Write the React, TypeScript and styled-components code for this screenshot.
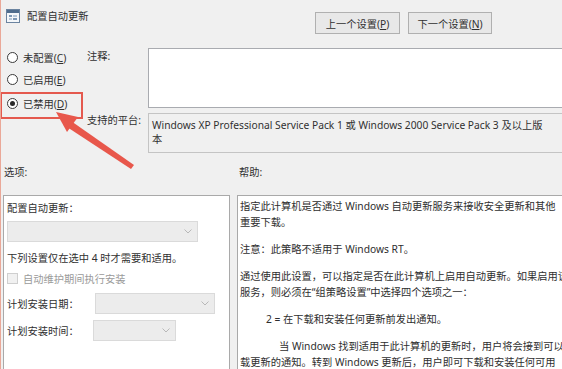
import styled, { createGlobalStyle } from "styled-components";

const GlobalStyle = createGlobalStyle`
  html, body {
    margin: 0;
    padding: 0;
    background: #f0f0f0;
  }
  body {
    font-family: "Noto Sans", "Noto Sans CJK SC", sans-serif;
    font-size: 10.25px;
    color: #303030;
  }
`;

const Window = styled.div`
  position: relative;
  width: 562px;
  height: 369px;
  overflow: hidden;
  box-sizing: border-box;
  border-left: 1px solid #eaa898;
  background: #f0f0f0;
`;

const Header = styled.div`
  height: 48px;
  display: flex;
  align-items: flex-start;
`;

const Title = styled.div`
  width: 314px;
  padding: 9px 0 0 5px;
  box-sizing: border-box;
  display: flex;
  align-items: center;
  gap: 7px;
  line-height: 14px;
`;

const NavButtons = styled.div`
  display: flex;
  gap: 8px;
  padding-top: 12px;
`;

const NavButton = styled.button<{ $w: number }>`
  width: ${(p) => p.$w}px;
  height: 22px;
  padding: 0;
  font: inherit;
  color: #303030;
  background: #e8e8e8;
  border: 1px solid #b0b0b0;
`;

const Key = styled.span`
  text-decoration: underline;
`;

const Settings = styled.div`
  display: grid;
  grid-template-columns: 86px 61px 1fr;
  grid-template-rows: 60px 40px;
  row-gap: 5px;
`;

const Radios = styled.div`
  grid-row: 1 / 3;
  display: flex;
  flex-direction: column;
  gap: 3px;
`;

const RadioItem = styled.label<{ $marked?: boolean }>`
  display: flex;
  align-items: center;
  gap: 5px;
  height: 19px;
  padding-left: 6px;
  ${(p) =>
    p.$marked &&
    `
    border: 2px solid #e4594e;
    border-left-width: 1px;
    padding: 0 0 4px 5px;
    width: 74px;
  `}
`;

const RadioCircle = styled.span<{ $on?: boolean }>`
  width: 11px;
  height: 11px;
  box-sizing: border-box;
  border-radius: 50%;
  border: 1px solid #3a3a3a;
  background: #fff;
  display: flex;
  align-items: center;
  justify-content: center;
  &::after {
    content: "";
    width: 5px;
    height: 5px;
    border-radius: 50%;
    background: ${(p) => (p.$on ? "#2a2a2a" : "transparent")};
  }
`;

const FieldLabel = styled.div<{ $top: number }>`
  line-height: 14px;
  padding-top: ${(p) => p.$top}px;
`;

const Comment = styled.div`
  width: 430px;
  background: #fff;
  border: 1px solid #a9abb0;
`;

const Platform = styled.div`
  width: 430px;
  box-sizing: border-box;
  border: 1px solid #c4c4c4;
  padding: 4px 3px;
  line-height: 14px;
  white-space: nowrap;
`;

const SectionLabels = styled.div`
  display: grid;
  grid-template-columns: 235px 1fr;
  height: 42px;
  padding: 12px 0 0 3px;
  box-sizing: border-box;
  line-height: 14px;
`;

const Panels = styled.div`
  display: grid;
  grid-template-columns: 227px 1fr;
  column-gap: 7px;
  padding-left: 2px;
`;

const OptionsPanel = styled.div`
  height: 180px;
  background: #fff;
  border: 1px solid #a9a9a9;
  padding: 4px 3px 0;
  box-sizing: border-box;
`;

const Line = styled.div<{ $gap?: number }>`
  line-height: 16px;
  margin-top: ${(p) => p.$gap ?? 0}px;
  white-space: nowrap;
`;

const Select = styled.div<{ $w: number; $gap?: number }>`
  width: ${(p) => p.$w}px;
  height: 21px;
  margin-top: ${(p) => p.$gap ?? 0}px;
  box-sizing: border-box;
  background: #ececec;
  border: 1px solid #dadada;
  display: flex;
  align-items: center;
  justify-content: flex-end;
  padding-right: 5px;
`;

const CheckRow = styled.div`
  display: flex;
  align-items: center;
  gap: 5px;
  height: 16px;
  margin-top: 4px;
  color: #9a9a9a;
`;

const CheckBox = styled.span`
  width: 11px;
  height: 11px;
  box-sizing: border-box;
  border: 1px solid #cfcfcf;
  background: #f1f1f1;
`;

const SelectRow = styled.div<{ $label: number; $gap: number }>`
  display: grid;
  grid-template-columns: ${(p) => p.$label}px auto;
  align-items: center;
  margin-top: ${(p) => p.$gap}px;
`;

const HelpPanel = styled.div`
  height: 180px;
  width: 400px;
  background: #fff;
  border: 1px solid #a9a9a9;
  padding: 2px 2px 0;
  box-sizing: border-box;
  color: #2e2e2e;
`;

const HelpPara = styled.div<{ $indent?: number; $gap?: number }>`
  margin-top: ${(p) => p.$gap ?? 0}px;
  padding-left: ${(p) => p.$indent ?? 0}px;
  line-height: 16px;
  white-space: nowrap;
`;

const FirstIndent = styled.span`
  padding-left: 39px;
`;

const Annotation = styled.svg`
  position: absolute;
  left: 0;
  top: 0;
  pointer-events: none;
`;

function Chevron() {
  return (
    <svg width="8" height="5" viewBox="0 0 8 5">
      <polyline points="0.5,0.5 4,4 7.5,0.5" fill="none" stroke="#b8b8b8" strokeWidth="1" />
    </svg>
  );
}

function PolicyIcon() {
  return (
    <svg width="14" height="14" viewBox="0 0 14 14">
      <rect x="0.5" y="0.5" width="13" height="13" fill="#f4f7fa" stroke="#6b84a0" />
      <rect x="1" y="1" width="12" height="3" fill="#4f6d8e" />
      <rect x="3" y="6" width="3" height="2" fill="#7d98b6" />
      <rect x="7" y="6" width="4" height="2" fill="#b5c6d8" />
      <rect x="3" y="9" width="3" height="2" fill="#b5c6d8" />
      <rect x="7" y="9" width="4" height="2" fill="#7d98b6" />
    </svg>
  );
}

export default function App() {
  return (
    <>
      <GlobalStyle />
      <Window>
        <Header>
          <Title>
            <PolicyIcon />
            <span>配置自动更新</span>
          </Title>
          <NavButtons>
            <NavButton $w={85}>
              上一个设置(<Key>P</Key>)
            </NavButton>
            <NavButton $w={84}>
              下一个设置(<Key>N</Key>)
            </NavButton>
          </NavButtons>
        </Header>

        <Settings>
          <Radios>
            <RadioItem>
              <RadioCircle />
              <span>
                未配置(<Key>C</Key>)
              </span>
            </RadioItem>
            <RadioItem>
              <RadioCircle />
              <span>
                已启用(<Key>E</Key>)
              </span>
            </RadioItem>
            <RadioItem $marked>
              <RadioCircle $on />
              <span>
                已禁用(<Key>D</Key>)
              </span>
            </RadioItem>
          </Radios>
          <FieldLabel $top={1}>注释:</FieldLabel>
          <Comment />
          <FieldLabel $top={0}>支持的平台:</FieldLabel>
          <Platform>
            Windows XP Professional Service Pack 1 或 Windows 2000 Service Pack 3 及以上版
            <br />本
          </Platform>
        </Settings>

        <SectionLabels>
          <span>选项:</span>
          <span>帮助:</span>
        </SectionLabels>

        <Panels>
          <OptionsPanel>
            <Line>配置自动更新：</Line>
            <Select $w={191} $gap={5}>
              <Chevron />
            </Select>
            <Line $gap={8}>下列设置仅在选中 4 时才需要和适用。</Line>
            <CheckRow>
              <CheckBox />
              <span>自动维护期间执行安装</span>
            </CheckRow>
            <SelectRow $label={88} $gap={7}>
              <span>计划安装日期：</span>
              <Select $w={120}>
                <Chevron />
              </Select>
            </SelectRow>
            <SelectRow $label={86} $gap={6}>
              <span>计划安装时间：</span>
              <Select $w={83}>
                <Chevron />
              </Select>
            </SelectRow>
          </OptionsPanel>

          <HelpPanel>
            <HelpPara>
              指定此计算机是否通过 Windows 自动更新服务来接收安全更新和其他
              <br />
              重要下载。
            </HelpPara>
            <HelpPara $gap={11}>注意：此策略不适用于 Windows RT。</HelpPara>
            <HelpPara $gap={11}>
              通过使用此设置，可以指定是否在此计算机上启用自动更新。如果启用该
              <br />
              服务，则必须在“组策略设置”中选择四个选项之一：
            </HelpPara>
            <HelpPara $gap={11} $indent={26}>
              2 = 在下载和安装任何更新前发出通知。
            </HelpPara>
            <HelpPara $gap={11}>
              <FirstIndent>当 Windows 找到适用于此计算机的更新时，用户将会接到可以下</FirstIndent>
              <br />
              载更新的通知。转到 Windows 更新后，用户即可下载和安装任何可用
            </HelpPara>
          </HelpPanel>
        </Panels>

        <Annotation width="562" height="369" viewBox="0 0 562 369">
          <polygon points="130,169 133,165 70,121 66,127" fill="#e8574b" />
          <polygon points="55,112 77,117 66,132" fill="#e8574b" />
        </Annotation>
      </Window>
    </>
  );
}
